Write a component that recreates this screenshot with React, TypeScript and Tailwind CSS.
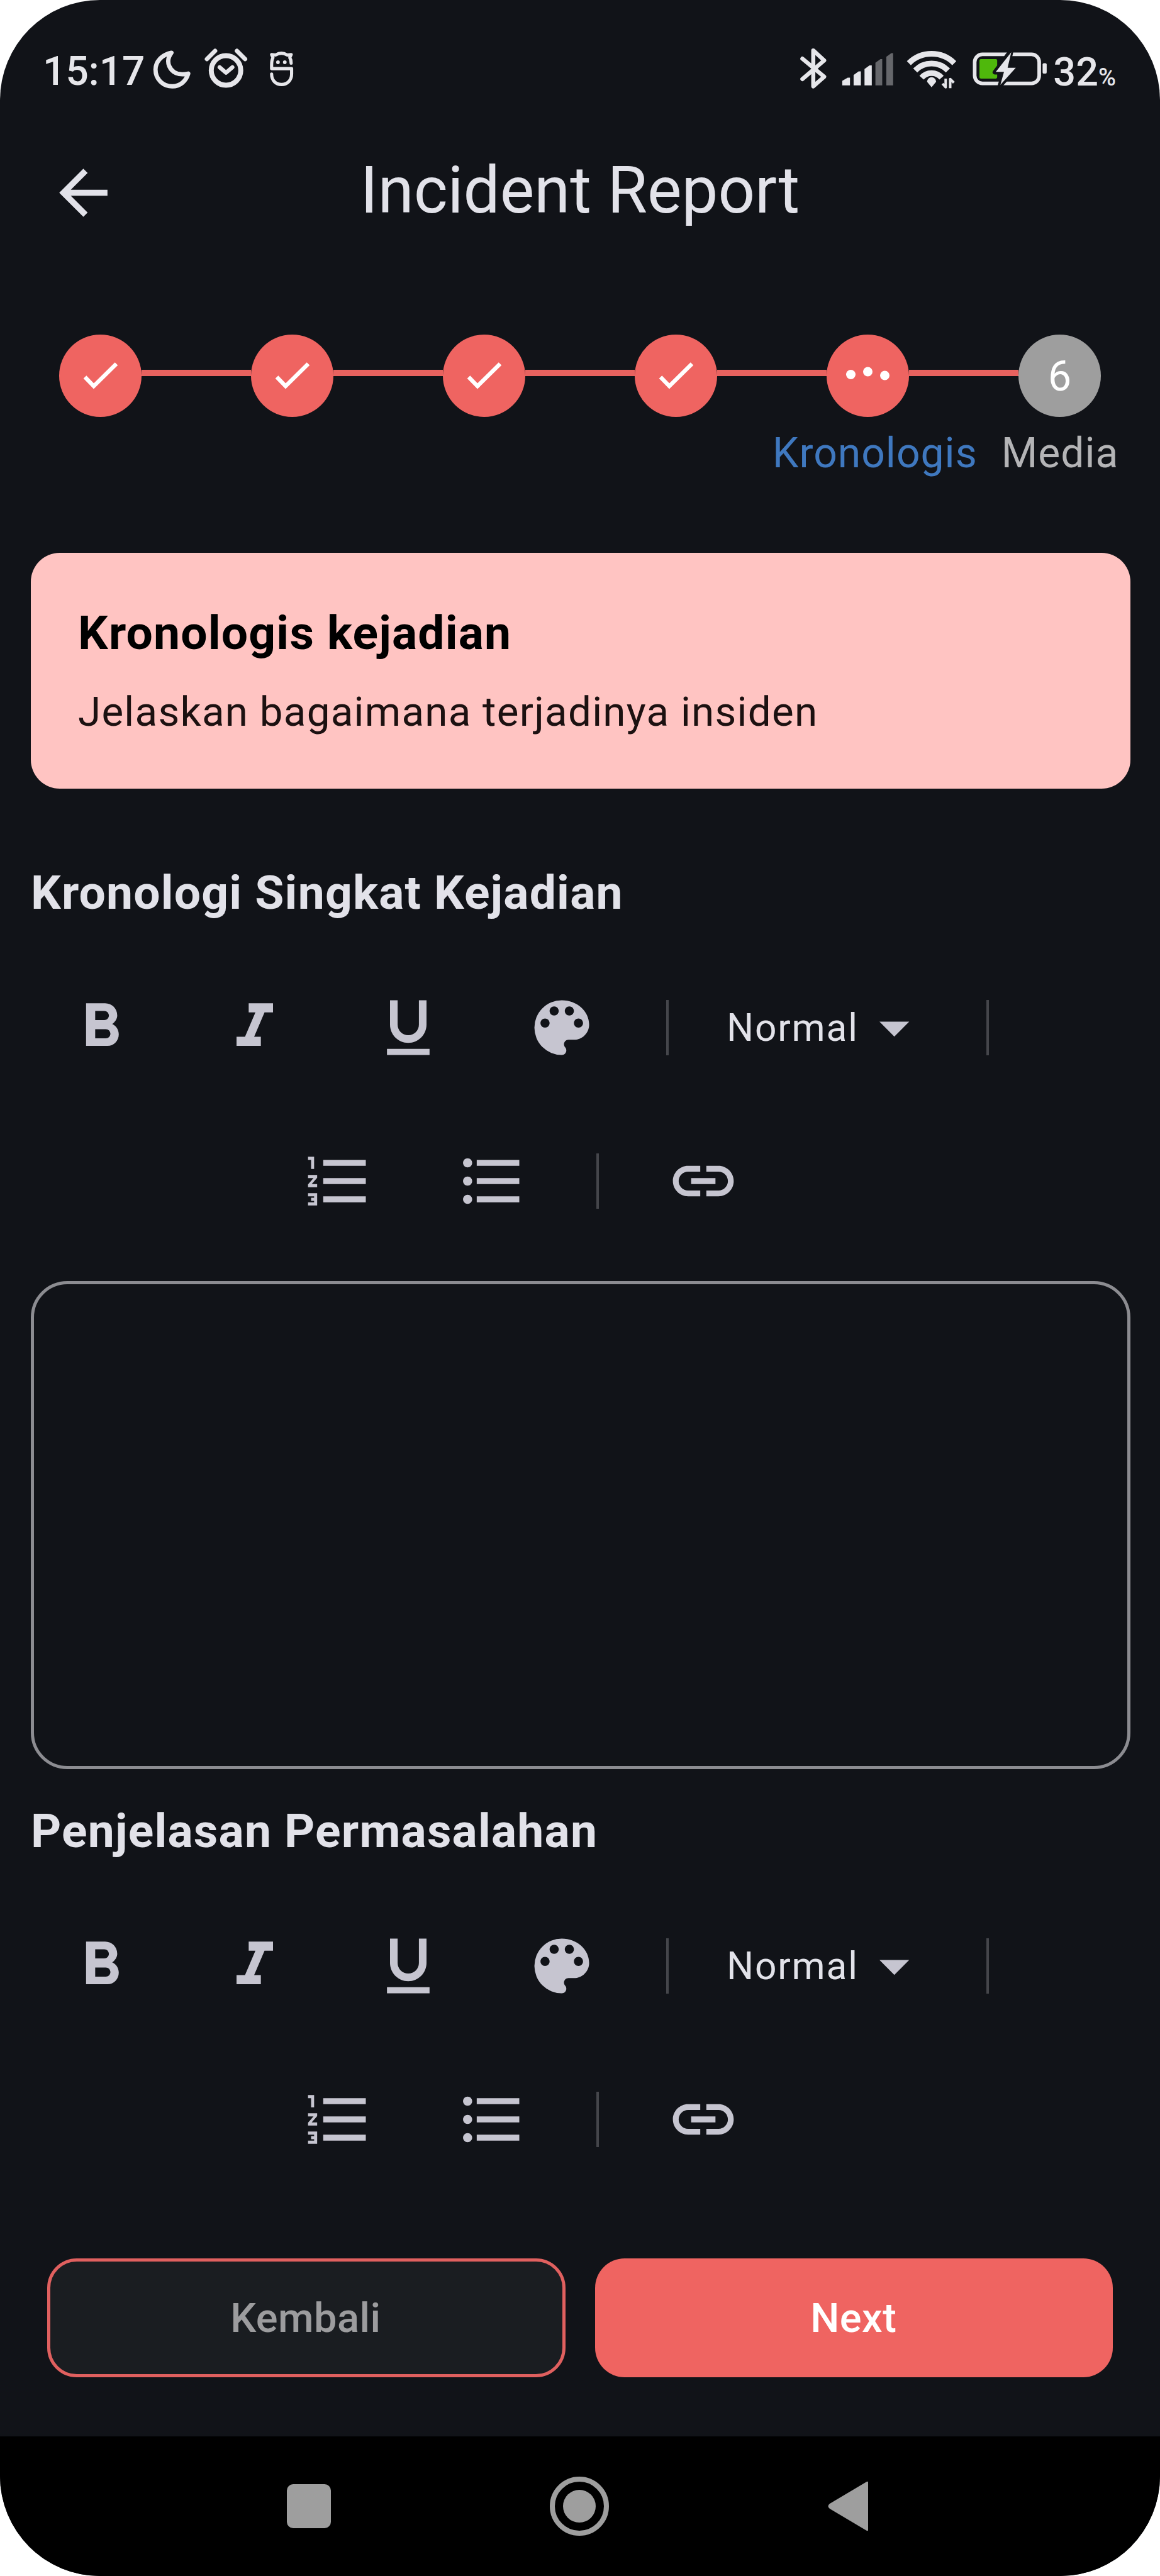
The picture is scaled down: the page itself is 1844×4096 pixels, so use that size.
import type { ReactNode } from "react";
import {
  MdArrowBack,
  MdFormatBold,
  MdFormatItalic,
  MdFormatUnderlined,
  MdColorLens,
  MdFormatListNumbered,
  MdFormatListBulleted,
  MdLink,
  MdArrowDropDown,
} from "react-icons/md";

const SCALE = 0.7223;

// Status-bar glyphs share one vertical band so they all align on its centre.
function StatusGlyph({ x, w, className, children }: { x: number; w: number; className?: string; children: ReactNode }) {
  return (
    <svg
      width={w * SCALE}
      height={110 * SCALE}
      viewBox={`${x} 102 ${w} 110`}
      fill="none"
      stroke="#e6e6ea"
      strokeLinecap="round"
      strokeLinejoin="round"
      className={`shrink-0 ${className ?? ""}`}
    >
      {children}
    </svg>
  );
}

function StatusBar() {
  return (
    <div className="flex h-[226px] items-center text-[#e6e6ea]">
      <div className="mt-[1px] ml-[68px] w-[172px] text-[64px] leading-none font-medium whitespace-nowrap">15:17</div>
      <StatusGlyph x={332} w={92}>
        <path d="M377 117C356 121 342 137 342 154c0 21 16 37 37 37 17 0 30-11 35-28C392 168 378 160 372 146 368 136 371 125 377 117Z" strokeWidth="9.5" />
      </StatusGlyph>
      <StatusGlyph x={445} w={105} className="ml-[15px]">
        <circle cx="498" cy="156" r="32.5" strokeWidth="11" />
        <path d="M484 149 498 161 512 149" strokeWidth="9" />
        <path d="M456 131 474 113M522 113 540 131" strokeWidth="9.5" />
      </StatusGlyph>
      <StatusGlyph x={590} w={60} className="ml-[29px]">
        <path d="M641 140C641 134 640 131 638 128L641 121 632 122C624 117 615 117 607 122L598 121 601 128C598 133 598 138 598 144V152H642V164C642 178 632 187 620 187 607 187 598 178 598 164" strokeWidth="7" />
        <circle cx="612" cy="138" r="4" fill="#e6e6ea" stroke="none" />
        <circle cx="627" cy="138" r="4" fill="#e6e6ea" stroke="none" />
      </StatusGlyph>
      <div className="ml-auto flex w-[575px] shrink-0 items-center">
        <StatusGlyph x={1757} w={68}>
          <path d="M1766 130 1814 170 1790 191V112L1814 134 1766 175" strokeWidth="9" />
        </StatusGlyph>
        <StatusGlyph x={1850} w={120} className="ml-[18px]">
          <g stroke="none" fill="#e6e6ea">
            <path d="M1854 189V179L1866 172H1871V189Z" />
            <path d="M1879 189V166L1890 158H1895V189Z" />
            <path d="M1903 189V153L1914 145H1919V189Z" />
          </g>
          <g stroke="none" fill="#66676b">
            <path d="M1927 189V139L1938 131H1942V189Z" />
            <path d="M1951 189V126L1962 118H1966V189Z" />
          </g>
        </StatusGlyph>
        <StatusGlyph x={1992} w={116} className="ml-[16px]">
          <g strokeWidth="12.5" strokeLinecap="butt">
            <path d="M2000 140A71 71 0 0 1 2100 140" />
            <path d="M2014 156A50 50 0 0 1 2086 156" />
            <path d="M2028 172A29 29 0 0 1 2072 172" />
          </g>
          <path d="M2040 181A10 10 0 0 1 2060 181L2050 193Z" fill="#e6e6ea" stroke="none" />
          <path d="M2081 174V193L2074 185M2091 195V175L2099 183" strokeWidth="5.5" strokeLinecap="butt" />
        </StatusGlyph>
        <StatusGlyph x={2137} w={170} className="ml-[21px]">
          <rect x="2144.500" y="120.500" width="142" height="64" rx="17" strokeWidth="8" />
          <rect x="2155" y="131" width="39" height="43" rx="3" fill="#4fb80c" stroke="none" />
          <path d="M2225 112 2189 160H2209L2200 190 2236 149H2217Z" fill="#111318" stroke="#111318" strokeWidth="10" />
          <path d="M2225 116 2191 159H2209L2201 188 2235 150H2217Z" fill="#e6e6ea" stroke="none" />
          <rect x="2294" y="140" width="9" height="23" rx="3" fill="#e6e6ea" stroke="none" />
        </StatusGlyph>
        <div className="mt-[2px] ml-[8px] flex items-baseline text-[63px] leading-none font-medium">
          32<span className="text-[38px]">%</span>
        </div>
      </div>
    </div>
  );
}

function Header() {
  return (
    <header className="grid h-[150px] grid-cols-[1fr_auto_1fr] items-center text-[#e2e2e9]">
      <MdArrowBack className="mt-[10px] ml-[75px] size-[115px]" />
      <h1 className="pt-[3px] text-[103px] leading-none font-normal">Incident Report</h1>
      <span />
    </header>
  );
}

const steps = ["done", "done", "done", "done", "current", "pending"];

function Stepper() {
  return (
    <div className="mt-[156px] h-[347px]">
      <div className="flex items-center pl-[94px]">
        {steps.map((state, i) => (
          <div key={i} className="flex items-center">
            <div
              className={`flex size-[131px] items-center justify-center rounded-full ${state === "pending" ? "bg-[#9e9e9e]" : "bg-[#ef6461]"}`}
            >
              {state === "done" && (
                <svg viewBox="0 0 131 131" className="size-full" fill="none" stroke="#fff" strokeWidth="6.500">
                  <path d="M41 67.500 55 82 91 46.500" />
                </svg>
              )}
              {state === "current" && (
                <svg viewBox="0 0 131 131" className="size-full" fill="#fff">
                  <circle cx="38.500" cy="63.500" r="7.500" />
                  <circle cx="65.500" cy="59" r="7.500" />
                  <circle cx="92.500" cy="65" r="7.500" />
                </svg>
              )}
              {state === "pending" && <span className="pt-[2px] text-[66px] leading-none text-white">{i + 1}</span>}
            </div>
            {i < steps.length - 1 && <div className="-mt-[10px] h-[10px] w-[174px] bg-[#e8625f]" />}
          </div>
        ))}
      </div>
      <div className="mt-[18px] flex h-[80px] items-center gap-[38px] pl-[1228px] text-[66px] leading-none tracking-[1px]">
        <span className="text-[#3f78bf]">Kronologis</span>
        <span className="text-[#b4b4b6]">Media</span>
      </div>
    </div>
  );
}

function InfoCard() {
  return (
    <div className="mr-[47px] ml-[49px] h-[375px] rounded-[46px] bg-[#ffc4c2] pt-[77px]">
      <div className="flex h-[100px] items-center pl-[75px] text-[75px] leading-none font-bold tracking-[1.2px] text-black">
        Kronologis kejadian
      </div>
      <div className="mt-[26px] flex h-[100px] items-center pl-[75px] text-[65.5px] leading-none tracking-[1.25px] text-[#1c1111]">
        Jelaskan bagaimana terjadinya insiden
      </div>
    </div>
  );
}

function ToolButton({ children }: { children: ReactNode }) {
  return <div className="flex h-full w-[244px] items-center justify-center">{children}</div>;
}

function Divider() {
  return <div className="mr-[44px] ml-[44px] h-[88px] w-[4px] bg-[#45464b]" />;
}

const icon = "size-[116px]";

function Section({ title, editor }: { title: string; editor?: boolean }) {
  return (
    <section>
      <h2 className="flex h-[150px] items-center pl-[49px] text-[75px] leading-none font-bold tracking-[1.2px] text-[#e2e2e9]">
        {title}
      </h2>
      <div className="mt-[18px] text-[#c6c5d0]">
        <div className="flex h-[244px] items-center pl-[39px]">
          <ToolButton><MdFormatBold className={icon} /></ToolButton>
          <ToolButton><MdFormatItalic className={icon} /></ToolButton>
          <ToolButton><MdFormatUnderlined className={icon} /></ToolButton>
          <ToolButton><MdColorLens className={icon} /></ToolButton>
          <Divider />
          <div className="flex w-[417px] items-center justify-between pr-[38px] pl-[48px]">
            <span className="pt-[2px] text-[60.500px] leading-none tracking-[1.8px] text-[#e2e2e9]">Normal</span>
            <MdArrowDropDown className="mr-[8px] size-[116px]" />
          </div>
          <Divider />
        </div>
        <div className="flex h-[244px] items-center pl-[416px]">
          <ToolButton><MdFormatListNumbered className={icon} /></ToolButton>
          <ToolButton><MdFormatListBulleted className={icon} /></ToolButton>
          <Divider />
          <ToolButton><MdLink className={icon} /></ToolButton>
        </div>
      </div>
      {editor && (
        <div className="mt-[37px] mr-[47px] mb-[23px] ml-[49px] h-[776px] rounded-[58px] border-[5px] border-[#8c8c91]" />
      )}
    </section>
  );
}

function FooterActions() {
  return (
    <div className="mt-auto mb-[94px] grid grid-cols-2 gap-[47px] px-[75px] text-[65px] leading-none font-medium">
      <button className="h-[189px] rounded-[47px] border-[5px] border-[#e0605f] bg-[#1a1d21] pt-[2px] pr-[2px] tracking-[0.4px] text-[#9c9c9e]">
        Kembali
      </button>
      <button className="h-[189px] rounded-[47px] bg-[#ef6461] pt-[2px] pr-[1px] tracking-[0.4px] text-white">Next</button>
    </div>
  );
}

function NavigationBar() {
  return (
    <nav className="flex h-[222px] shrink-0 items-center bg-black pl-[456px]">
      <div className="size-[70px] rounded-[10px] bg-[#9e9e9e]" />
      <div className="ml-[348px] flex size-[94px] items-center justify-center rounded-full border-[8px] border-[#9e9e9e]">
        <div className="size-[52px] rounded-full bg-[#9e9e9e]" />
      </div>
      <svg viewBox="0 0 64 80" className="ml-[348px] h-[80px] w-[64px]" fill="#9e9e9e">
        <path d="M64 2V78Q64 80 61 78.500L3 44Q-2 40 3 36L61 1.500Q64 0 64 2Z" />
      </svg>
    </nav>
  );
}

export default function App() {
  return (
    <div className="h-[4096px] w-[1844px] bg-white">
      <div className="flex h-full w-full flex-col overflow-hidden rounded-[159px] bg-[#111318] font-['Roboto',sans-serif]">
        <StatusBar />
        <Header />
        <Stepper />
        <InfoCard />
        <div className="h-[90px]" />
        <Section title="Kronologi Singkat Kejadian" editor />
        <Section title="Penjelasan Permasalahan" />
        <FooterActions />
        <NavigationBar />
      </div>
    </div>
  );
}
